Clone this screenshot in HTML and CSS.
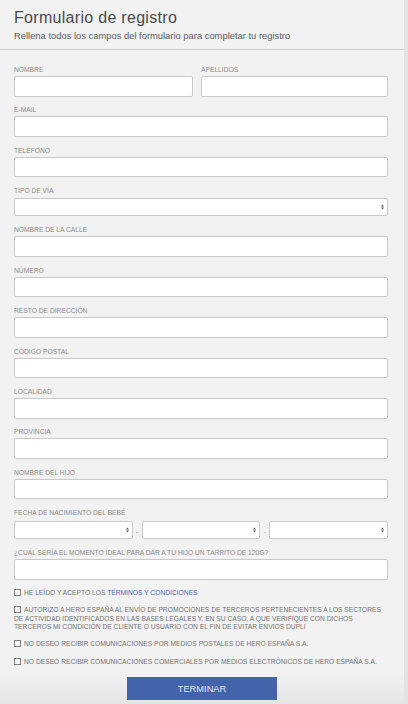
FILE: index.html
```html
<!DOCTYPE html>
<html lang="es">
<head>
<meta charset="utf-8">
<title>Formulario de registro</title>
<link rel="stylesheet" href="styles.css">
</head>
<body>
<div class="page">
  <header class="head">
    <h1 class="title">Formulario de registro</h1>
    <p class="sub">Rellena todos los campos del formulario para completar tu registro</p>
  </header>

  <form class="form">
    <div class="row2">
      <div class="field"><label class="lbl">Nombre</label><input class="inp" type="text"></div>
      <div class="field"><label class="lbl">Apellidos</label><input class="inp" type="text"></div>
    </div>
    <div class="field"><label class="lbl">E-mail</label><input class="inp" type="text"></div>
    <div class="field"><label class="lbl">Teléfono</label><input class="inp" type="text"></div>
    <div class="field"><label class="lbl">Tipo de vía</label>
      <div class="sel"><select class="selbox"><option></option></select><svg class="arr" viewBox="0 0 3 6" width="3" height="6"><path d="M0 2.4 L1.5 0.6 L3 2.4 Z M0 3.6 L1.5 5.4 L3 3.6 Z" fill="#555"/></svg></div>
    </div>
    <div class="field"><label class="lbl">Nombre de la calle</label><input class="inp" type="text"></div>
    <div class="field"><label class="lbl">Número</label><input class="inp" type="text"></div>
    <div class="field"><label class="lbl">Resto de dirección</label><input class="inp" type="text"></div>
    <div class="field"><label class="lbl">Código postal</label><input class="inp" type="text"></div>
    <div class="field"><label class="lbl">Localidad</label><input class="inp" type="text"></div>
    <div class="field"><label class="lbl">Provincia</label><input class="inp" type="text"></div>
    <div class="field"><label class="lbl">Nombre del hijo</label><input class="inp" type="text"></div>
    <div class="field"><label class="lbl">Fecha de nacimiento del bebé</label>
      <div class="daterow">
        <div class="sel"><select class="selbox"><option></option></select><svg class="arr" viewBox="0 0 3 6" width="3" height="6"><path d="M0 2.4 L1.5 0.6 L3 2.4 Z M0 3.6 L1.5 5.4 L3 3.6 Z" fill="#555"/></svg></div>
        <span class="dash">-</span>
        <div class="sel"><select class="selbox"><option></option></select><svg class="arr" viewBox="0 0 3 6" width="3" height="6"><path d="M0 2.4 L1.5 0.6 L3 2.4 Z M0 3.6 L1.5 5.4 L3 3.6 Z" fill="#555"/></svg></div>
        <span class="dash">-</span>
        <div class="sel"><select class="selbox"><option></option></select><svg class="arr" viewBox="0 0 3 6" width="3" height="6"><path d="M0 2.4 L1.5 0.6 L3 2.4 Z M0 3.6 L1.5 5.4 L3 3.6 Z" fill="#555"/></svg></div>
      </div>
    </div>
    <div class="field"><label class="lbl">¿Cuál sería el momento ideal para dar a tu hijo un tarrito de 120g?</label><input class="inp" type="text"></div>

    <div class="checks">
      <p class="check"><input class="cb" type="checkbox">HE LEÍDO Y ACEPTO LOS <a class="link" href="#">TÉRMINOS Y CONDICIONES</a></p>
      <p class="check"><input class="cb" type="checkbox">AUTORIZO A HERO ESPAÑA AL ENVÍO DE PROMOCIONES DE TERCEROS PERTENECIENTES A LOS SECTORES<br>DE ACTIVIDAD IDENTIFICADOS EN LAS BASES LEGALES Y, EN SU CASO, A QUE VERIFIQUE CON DICHOS<br>TERCEROS MI CONDICIÓN DE CLIENTE O USUARIO CON EL FIN DE EVITAR ENVIOS DUPLI</p>
      <p class="check"><input class="cb" type="checkbox">NO DESEO RECIBIR COMUNICACIONES POR MEDIOS POSTALES DE HERO ESPAÑA S.A.</p>
      <p class="check"><input class="cb" type="checkbox">NO DESEO RECIBIR COMUNICACIONES COMERCIALES POR MEDIOS ELECTRÓNICOS DE HERO ESPAÑA S.A.</p>
    </div>
  </form>

  <div class="actions"><button class="btn" type="button">TERMINAR</button></div>
</div>
</body>
</html>
```

FILE: styles.css
```css
html {
  min-height: 100%;
  background:
    linear-gradient(to right, rgba(0,0,0,0) 404px, #e3e3e6 404px),
    linear-gradient(to bottom, #f2f2f2 0, #f2f2f2 672px, #e6e6e6 704px);
}
body {
  margin: 0;
  font-family: "Liberation Sans", Arial, sans-serif;
}
.page {
  width: 404px;
}
.head {
  box-sizing: content-box;
  height: 41px;
  padding: 8px 14px 0;
  border-bottom: 1px solid #cdcdcd;
}
.title {
  margin: 0;
  font-size: 16px;
  letter-spacing: 0.3px;
  font-weight: normal;
  line-height: 20px;
  color: #4a4a4a;
}
.sub {
  margin: 1.7px 0 0;
  font-size: 9.4px;
  line-height: 11px;
  color: #5c5c5c;
}
.form {
  margin: 0;
  padding: 15px 16px 0 14px;
}
.row2 {
  display: grid;
  grid-template-columns: 179px 1fr;
  column-gap: 8px;
}
.field {
  margin-bottom: 8.95px;
}
.lbl {
  display: block;
  font-size: 6.7px;
  line-height: 10px;
  color: #8c8c8c;
  text-transform: uppercase;
  margin-bottom: 1px;
  white-space: nowrap;
}
.inp {
  display: block;
  box-sizing: border-box;
  width: 100%;
  height: 20.5px;
  margin: 0;
  padding: 0 4px;
  border: 1px solid #c9c9c9;
  border-radius: 2px;
  background: #fff;
}
.sel {
  position: relative;
  height: 18px;
  margin-top: 2px;
}
.selbox {
  display: block;
  box-sizing: border-box;
  width: 100%;
  height: 18px;
  margin: 0;
  padding: 0 4px;
  border: 1px solid #c9c9c9;
  border-radius: 2px;
  background: #fff;
  -webkit-appearance: none;
  appearance: none;
}
.arr {
  position: absolute;
  right: 4px;
  top: 6px;
}
.daterow {
  display: flex;
  align-items: center;
}
.daterow .sel {
  flex: 1;
}
.dash {
  width: 9px;
  text-align: center;
  font-size: 7px;
  color: #999;
  margin-top: 4px;
}
.checks {
  margin-top: 0.5px;
}
.check {
  margin: 0 0 9.3px;
  font-size: 6.7px;
  line-height: 8.3px;
  color: #747474;
  white-space: nowrap;
}
.check:last-child {
  margin-bottom: 0;
}
.cb {
  -webkit-appearance: none;
  appearance: none;
  box-sizing: border-box;
  display: inline-block;
  width: 7px;
  height: 7px;
  margin: 0 3px 0 0;
  border: 1px solid #7f7f7f;
  background: #f7f7f7;
  vertical-align: -1px;
}
.link {
  color: #4a6cb5;
  text-decoration: none;
}
.actions {
  display: flex;
  justify-content: center;
  padding-top: 10.8px;
}
.btn {
  width: 150px;
  height: 22.7px;
  border: none;
  border-radius: 0;
  background: #4363ab;
  color: #e4e8f1;
  font-family: "Liberation Sans", Arial, sans-serif;
  font-size: 9.3px;
  padding: 0;
}
```
